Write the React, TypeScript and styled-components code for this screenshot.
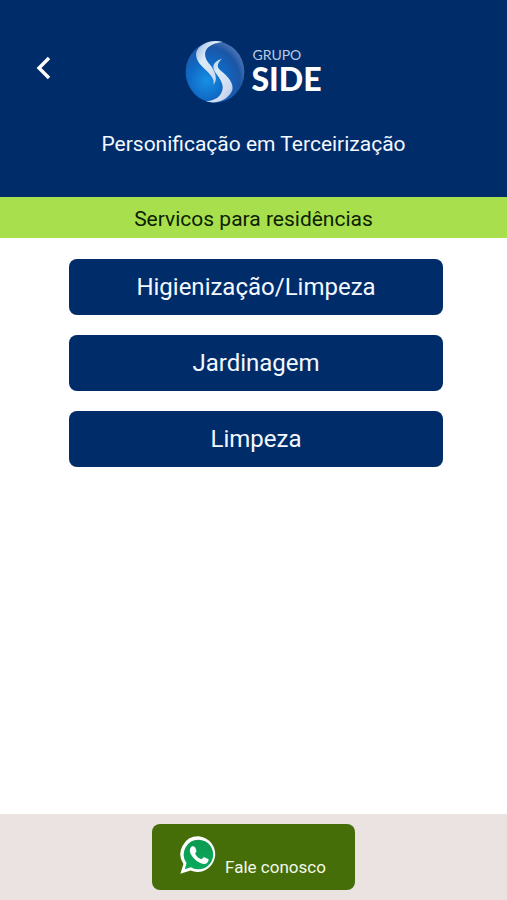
import React from "react";
import styled, { createGlobalStyle } from "styled-components";

const GlobalStyle = createGlobalStyle`
  *, *::before, *::after { box-sizing: border-box; }
  body {
    margin: 0;
    background: #ffffff;
    font-family: Roboto, "Liberation Sans", sans-serif;
  }
  button { font-family: inherit; border: 0; cursor: pointer; }
`;

const Screen = styled.div`
  display: flex;
  flex-direction: column;
  min-height: 100vh;
`;

const Header = styled.header`
  display: flex;
  flex-direction: column;
  gap: 25px;
  padding: 40px 24px 38px;
  background: #002d6a;
  color: #f4f8ff;
`;

const TopBar = styled.div`
  display: grid;
  grid-template-columns: 40px 1fr 40px;
  align-items: center;
`;

const BackButton = styled.button`
  display: flex;
  align-items: center;
  justify-content: center;
  height: 40px;
  padding: 0;
  margin-bottom: 8px;
  background: transparent;
  color: #ffffff;
`;

const Logo = styled.div`
  display: flex;
  align-items: center;
  justify-content: center;
  gap: 6px;
`;

const LogoText = styled.div`
  display: flex;
  flex-direction: column;
  font-family: Lato, sans-serif;
`;

const LogoGroup = styled.span`
  padding-left: 1px;
  font-size: 14px;
  line-height: 14px;
  color: #b9cbe4;
`;

const LogoName = styled.span`
  font-size: 32px;
  line-height: 34px;
  font-weight: 900;
  color: #ffffff;
`;

const Slogan = styled.p`
  margin: 0;
  font-size: 21px;
  line-height: 30px;
  text-align: center;
`;

const SectionTitle = styled.h1`
  margin: 0;
  padding: 8px 16px 4px;
  background: #a7e04c;
  color: #0d2000;
  font-size: 21px;
  line-height: 29px;
  font-weight: 400;
  text-align: center;
`;

const Services = styled.main`
  display: flex;
  flex: 1;
  flex-direction: column;
  gap: 20px;
  padding: 21px 64px 21px 69px;
`;

const ServiceButton = styled.button`
  height: 56px;
  padding: 0 16px;
  border-radius: 8px;
  background: #002d6a;
  color: #f4f8ff;
  font-size: 24px;
  line-height: 32px;
`;

const Footer = styled.footer`
  display: flex;
  justify-content: center;
  padding: 10px;
  background: #ebe2e2;
`;

const ContactButton = styled.button`
  display: flex;
  align-items: flex-end;
  gap: 8px;
  padding: 12px 29px 12px 28px;
  height: 66px;
  border-radius: 8px;
  background: #466e08;
  color: #f3f8ea;
  font-size: 17px;
  line-height: 22px;
`;

const WhatsAppIcon = styled.svg`
  align-self: flex-start;
`;

const services = ["Higienização/Limpeza", "Jardinagem", "Limpeza"];

function Globe() {
  return (
    <svg width="60" height="64" viewBox="18 16 180 192" aria-hidden="true">
      <defs>
        <radialGradient id="globe" cx="0.36" cy="0.64" r="0.7">
          <stop offset="0" stopColor="#1690e4" />
          <stop offset="0.45" stopColor="#1069c4" />
          <stop offset="0.8" stopColor="#1b55a6" />
          <stop offset="1" stopColor="#4d75b5" />
        </radialGradient>
        <linearGradient id="ribbon" x1="0" y1="0" x2="1" y2="1">
          <stop offset="0" stopColor="#8fb5df" />
          <stop offset="0.35" stopColor="#dcebf8" />
          <stop offset="0.75" stopColor="#d0dbf0" />
          <stop offset="1" stopColor="#a9bce2" />
        </linearGradient>
      </defs>
      <ellipse cx="108" cy="112" rx="88" ry="92" fill="url(#globe)" />
      <path
        d="M132 22C98 12 60 28 52 52C46 82 76 100 92 118C102 130 106 138 103 150C118 135 108 112 98 96C80 76 74 62 81 47C88 32 110 24 132 22Z"
        fill="url(#ribbon)"
      />
      <path
        d="M129 72C106 78 98 94 106 108C114 122 133 140 131 161C129 185 108 199 80 200C122 212 152 188 160 166C165 140 140 120 123 106C113 98 114 85 129 72Z"
        fill="url(#ribbon)"
      />
    </svg>
  );
}

export default function App() {
  return (
    <Screen>
      <GlobalStyle />
      <Header>
        <TopBar>
          <BackButton type="button" aria-label="Voltar">
            <svg width="16" height="26" viewBox="0 0 16 26" fill="none" aria-hidden="true">
              <path d="M13 3L3 13L13 23" stroke="currentColor" strokeWidth="3.4" />
            </svg>
          </BackButton>
          <Logo>
            <Globe />
            <LogoText>
              <LogoGroup>GRUPO</LogoGroup>
              <LogoName>SIDE</LogoName>
            </LogoText>
          </Logo>
        </TopBar>
        <Slogan>Personificação em Terceirização</Slogan>
      </Header>
      <SectionTitle>Servicos para residências</SectionTitle>
      <Services>
        {services.map((name) => (
          <ServiceButton type="button" key={name}>
            {name}
          </ServiceButton>
        ))}
      </Services>
      <Footer>
        <ContactButton type="button">
          <WhatsAppIcon width="37" height="38" viewBox="0 0 108 111" aria-hidden="true">
            <defs>
              <linearGradient id="bubble" x1="0" y1="0" x2="0" y2="1">
                <stop offset="0" stopColor="#0b9a50" />
                <stop offset="1" stopColor="#0baa5c" />
              </linearGradient>
            </defs>
            <path
              d="M54 1A52 52 0 0 0 10 82L1 110L31 101A52 52 0 1 0 54 1Z"
              fill="#ffffff"
            />
            <path
              d="M54 11A43 43 0 0 0 19 79L14 97L32 91A43 43 0 1 0 54 11Z"
              fill="url(#bubble)"
            />
            <path
              d="M34 31C38 28 43 30 45 35L48 43C49 46 44 50 44 52C48 60 54 65 62 68C65 68 68 61 71 62L82 67C86 69 81 78 77 80C69 84 58 79 49 73C40 66 31 55 29 46C28 40 30 34 34 31Z"
              fill="#ffffff"
            />
          </WhatsAppIcon>
          <span>Fale conosco</span>
        </ContactButton>
      </Footer>
    </Screen>
  );
}
